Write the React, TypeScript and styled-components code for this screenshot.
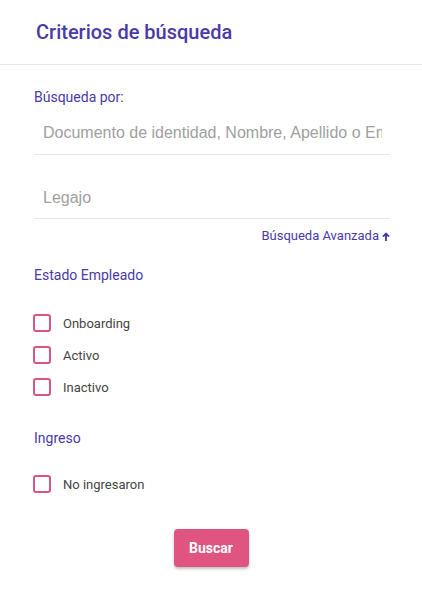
import React from "react";
import styled, { createGlobalStyle } from "styled-components";

const Global = createGlobalStyle`
  html, body { margin: 0; padding: 0; background: #fff; }
  body { font-family: Roboto, "Noto Sans", Arial, sans-serif; }
  * { box-sizing: border-box; }
`;

const Page = styled.div`
  width: 422px;
  min-height: 591px;
  background: #fff;
  display: flex;
  flex-direction: column;
`;

const Header = styled.header`
  height: 65px;
  border-bottom: 1px solid #e8e8e8;
  display: flex;
  align-items: center;
  padding-left: 36px;
`;

const Title = styled.h1`
  margin: 0;
  font-size: 20px;
  font-weight: 500;
  color: #4a39a8;
  line-height: 1;
`;

const Body = styled.div`
  padding: 24px 32px 0 34px;
  display: flex;
  flex-direction: column;
`;

const Label = styled.div<{ $mt?: number }>`
  font-size: 14px;
  color: #4a39a8;
  line-height: 16px;
  margin-top: ${(p) => p.$mt ?? 0}px;
`;

const Field = styled.div<{ $mt?: number; $h?: number }>`
  margin-top: ${(p) => p.$mt ?? 0}px;
  border-bottom: 1px solid #e6e6e6;
  height: ${(p) => p.$h ?? 35}px;
  display: flex;
  align-items: flex-start;
  overflow: hidden;
`;

const Input = styled.input`
  border: none;
  outline: none;
  width: 100%;
  padding: 0 8px 0 9px;
  font-family: "Liberation Sans", Arial, sans-serif;
  font-size: 16px;
  line-height: 26px;
  height: 26px;
  color: #333;
  background: transparent;
  &::placeholder {
    color: #a0a0a0;
  }
`;

const AdvancedLink = styled.a`
  align-self: flex-end;
  margin-top: 9px;
  font-size: 13px;
  line-height: 16px;
  color: #4a39a8;
  display: flex;
  align-items: center;
  gap: 3px;
  cursor: pointer;
`;

const CheckList = styled.div<{ $mt: number }>`
  display: flex;
  flex-direction: column;
  gap: 14px;
  margin-top: ${(p) => p.$mt}px;
`;

const CheckRow = styled.label`
  display: flex;
  align-items: center;
  height: 18px;
  cursor: pointer;
`;

const Box = styled.span`
  width: 18px;
  height: 18px;
  border: 2px solid #db5381;
  border-radius: 3px;
  margin-left: -1px;
  flex: none;
`;

const CheckText = styled.span`
  margin-left: 12px;
  font-size: 13px;
  color: #444;
`;

const ButtonRow = styled.div`
  display: flex;
  justify-content: center;
  margin: 36px -32px 0 -34px;
`;

const Button = styled.button`
  width: 75px;
  height: 38px;
  border: none;
  border-radius: 4px;
  background: #df5480;
  color: #fff;
  font-family: Roboto, Arial, sans-serif;
  font-weight: 700;
  font-size: 14px;
  box-shadow: 0 2px 3px rgba(0, 0, 0, 0.25);
  cursor: pointer;
`;

const ArrowUp = () => (
  <svg width="8" height="9" viewBox="0 0 8 9" fill="none">
    <path d="M4 9V2M1 4.6l3-3 3 3" stroke="#4a39a8" strokeWidth="1.9" />
  </svg>
);

const Check = ({ label }: { label: string }) => (
  <CheckRow>
    <Box />
    <CheckText>{label}</CheckText>
  </CheckRow>
);

export default function App() {
  return (
    <Page>
      <Global />
      <Header>
        <Title>Criterios de búsqueda</Title>
      </Header>
      <Body>
        <Label>Búsqueda por:</Label>
        <Field $mt={15}>
          <Input placeholder="Documento de identidad, Nombre, Apellido o Email" />
        </Field>
        <Field $mt={30} $h={34}>
          <Input placeholder="Legajo" />
        </Field>
        <AdvancedLink>
          Búsqueda Avanzada <ArrowUp />
        </AdvancedLink>
        <Label $mt={23}>Estado Empleado</Label>
        <CheckList $mt={31}>
          <Check label="Onboarding" />
          <Check label="Activo" />
          <Check label="Inactivo" />
        </CheckList>
        <Label $mt={34}>Ingreso</Label>
        <CheckList $mt={29}>
          <Check label="No ingresaron" />
        </CheckList>
        <ButtonRow>
          <Button>Buscar</Button>
        </ButtonRow>
      </Body>
    </Page>
  );
}
